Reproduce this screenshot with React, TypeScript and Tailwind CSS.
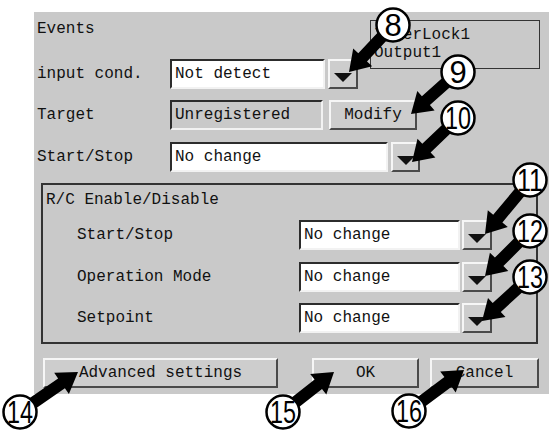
import type { ReactNode } from "react";

const MONO = "font-['Liberation_Mono',monospace] text-[16px] leading-[16px] text-[#111]";

function Field({ children, className = "", gray = false }: { children?: ReactNode; className?: string; gray?: boolean }) {
  return (
    <div
      className={`h-[30px] flex items-center pl-[3px] border-t-2 border-l-2 border-b-2 border-r-2 border-t-[#2c2c2c] border-l-[#2c2c2c] border-b-[#f2f2f2] border-r-[#f2f2f2] ${
        gray ? "bg-[#c9c9c9]" : "bg-white"
      } ${className}`}
    >
      <span className="whitespace-pre">{children}</span>
    </div>
  );
}

function RaisedButton({ children, className = "" }: { children?: ReactNode; className?: string }) {
  return (
    <div
      className={`h-[30px] flex items-center justify-center border-2 border-t-[#f6f6f6] border-l-[#f6f6f6] border-b-[#4a4a4a] border-r-[#4a4a4a] bg-[#cdcdcd] ${className}`}
    >
      {children}
    </div>
  );
}

function DropButton({ className = "" }: { className?: string }) {
  return (
    <RaisedButton className={`pt-[6px] ${className}`}>
      <svg width="18" height="9" viewBox="0 0 18 9">
        <polygon points="0,0 18,0 9,9" fill="#111" />
      </svg>
    </RaisedButton>
  );
}

type Callout = { n: string; cx: number; cy: number; tx: number; ty: number };

const CALLOUTS: Callout[] = [
  { n: "8", cx: 393, cy: 25, tx: 349, ty: 72 },
  { n: "9", cx: 458, cy: 72, tx: 411, ty: 114 },
  { n: "10", cx: 458, cy: 118, tx: 412, ty: 162 },
  { n: "11", cx: 530, cy: 180, tx: 485, ty: 234 },
  { n: "12", cx: 530, cy: 231, tx: 485, ty: 276 },
  { n: "13", cx: 530, cy: 277, tx: 482, ty: 321 },
  { n: "14", cx: 20, cy: 412, tx: 78, ty: 372 },
  { n: "15", cx: 283, cy: 412, tx: 334, ty: 372 },
  { n: "16", cx: 409, cy: 411, tx: 464, ty: 370 },
];

// thick black arrow from circle centre to the target
function arrowPoints(x1: number, y1: number, x2: number, y2: number) {
  const shaft = 6;
  const headW = 13;
  const headL = 20;
  const dx = x2 - x1;
  const dy = y2 - y1;
  const len = Math.hypot(dx, dy);
  const ux = dx / len;
  const uy = dy / len;
  const px = -uy;
  const py = ux;
  const bx = x2 - ux * headL;
  const by = y2 - uy * headL;
  const pts = [
    [x1 + px * shaft, y1 + py * shaft],
    [bx + px * shaft, by + py * shaft],
    [bx + px * headW, by + py * headW],
    [x2, y2],
    [bx - px * headW, by - py * headW],
    [bx - px * shaft, by - py * shaft],
    [x1 - px * shaft, y1 - py * shaft],
  ];
  return pts.map((p) => `${p[0].toFixed(1)},${p[1].toFixed(1)}`).join(" ");
}

function Callouts() {
  return (
    <svg className="absolute inset-0 pointer-events-none" width="549" height="435" viewBox="0 0 549 435">
      {CALLOUTS.map((c) => (
        <polygon key={`a${c.n}`} points={arrowPoints(c.cx, c.cy, c.tx, c.ty)} fill="#000" />
      ))}
      {CALLOUTS.map((c) => (
        <g key={`c${c.n}`}>
          <circle cx={c.cx} cy={c.cy} r="16.5" fill="#fff" stroke="#000" strokeWidth="2.5" />
          <text
            x={c.cx}
            y={c.cy + 11}
            textAnchor="middle"
            fontSize="31"
            fontFamily="'Liberation Sans', Arial, sans-serif"
            fill="#000"
            {...(c.n.length > 1 ? { textLength: 26, lengthAdjust: "spacingAndGlyphs" } : {})}
          >
            {c.n}
          </text>
        </g>
      ))}
    </svg>
  );
}

export default function App() {
  return (
    <div className={`relative w-[549px] h-[435px] bg-white pt-[12px] pl-[34px] overflow-hidden ${MONO}`}>
      <div className="w-[515px] h-[382px] bg-[#c9c9c9] flex flex-col">
        <div className="flex">
          <div className="flex flex-col">
            <div className="h-[34px] flex items-center pl-[3px]">Events</div>
            <div className="mt-[13px] h-[30px] flex items-center">
              <div className="w-[136px] pl-[3px]">input cond.</div>
              <Field className="w-[155px]">Not detect</Field>
              <DropButton className="ml-[3px] w-[30px]" />
            </div>
          </div>
          <div className="mt-[8px] ml-[12px] w-[170px] h-[49px] border border-[#333] pl-[3px] pt-[6px] flex flex-col gap-[2px]">
            <span>InterLock1</span>
            <span>Output1</span>
          </div>
        </div>

        <div className="mt-[11px] h-[30px] flex items-center">
          <div className="w-[136px] pl-[3px]">Target</div>
          <Field gray className="w-[153px]">Unregistered</Field>
          <RaisedButton className="ml-[6px] w-[88px]">Modify</RaisedButton>
        </div>

        <div className="mt-[12px] h-[30px] flex items-center">
          <div className="w-[136px] pl-[3px]">Start/Stop</div>
          <Field className="w-[218px]">No change</Field>
          <DropButton className="ml-[3px] w-[29px]" />
        </div>

        <div className="mt-[11px] ml-[7px] w-[497px] h-[161px] border-2 border-[#333] flex flex-col">
          <div className="h-[30px] flex items-center pl-[3px]">R/C Enable/Disable</div>
          {[
            { label: "Start/Stop", mt: "mt-[5px]" },
            { label: "Operation Mode", mt: "mt-[12px]" },
            { label: "Setpoint", mt: "mt-[11px]" },
          ].map((r) => (
            <div key={r.label} className={`${r.mt} h-[30px] flex items-center`}>
              <div className="w-[256px] pl-[34px]">{r.label}</div>
              <Field className="w-[161px]">No change</Field>
              <DropButton className="ml-[2px] w-[30px]" />
            </div>
          ))}
        </div>

        <div className="mt-[14px] flex">
          <RaisedButton className="ml-[9px] w-[235px]">Advanced settings</RaisedButton>
          <RaisedButton className="ml-[34px] w-[107px]">OK</RaisedButton>
          <RaisedButton className="ml-[11px] w-[109px]">Cancel</RaisedButton>
        </div>
      </div>
      <Callouts />
    </div>
  );
}
